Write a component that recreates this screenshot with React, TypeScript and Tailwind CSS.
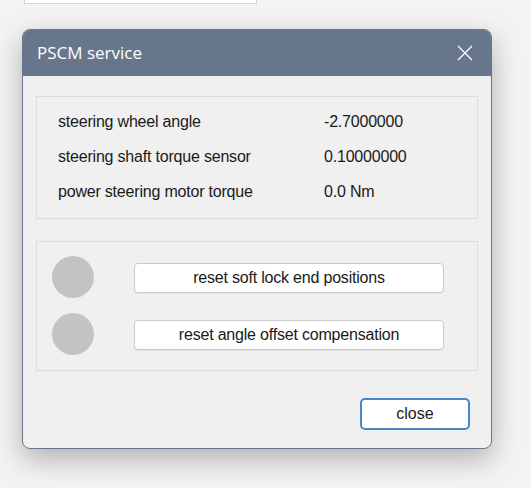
import React from "react";

const readings = [
  { label: "steering wheel angle", value: "-2.7000000" },
  { label: "steering shaft torque sensor", value: "0.10000000" },
  { label: "power steering motor torque", value: "0.0 Nm" },
];

const actions = ["reset soft lock end positions", "reset angle offset compensation"];

export default function App() {
  return (
    <div className="h-[488px] w-full overflow-hidden bg-[#f3f3f3] font-['Liberation_Sans',Arial,sans-serif] text-[#1a1a1a]">
      {/* edge of the window behind */}
      <div className="ml-[24px] h-[4px] w-[233px] border-x border-b border-[#d6d6d6] bg-white" />

      <div className="ml-[22px] mt-[25px] flex h-[420px] w-[470px] flex-col overflow-hidden rounded-[8px] border border-[#67768a] bg-[#f0f0f0] shadow-[0_10px_28px_rgba(0,0,0,0.28)]">
        <div className="flex h-[46px] shrink-0 items-center justify-between bg-[#67768a] pl-[14px] pr-[18px]">
          <span className="font-['Open_Sans',sans-serif] text-[17px] text-white">PSCM service</span>
          <svg width="16" height="16" viewBox="0 0 16 16" stroke="#ffffff" strokeWidth="1.3" fill="none">
            <path d="M1 1 L15 15 M15 1 L1 15" />
          </svg>
        </div>

        <div className="flex flex-col px-[13px]">
          <div className="mt-[20px] h-[123px] border border-[#dcdcdc] pb-[10px] pl-[21px] pt-[7px]">
            {readings.map((r) => (
              <div key={r.label} className="flex h-[35px] items-center text-[16px] tracking-[-0.2px]">
                <span className="w-[266px]">{r.label}</span>
                <span>{r.value}</span>
              </div>
            ))}
          </div>

          <div className="mt-[22px] flex h-[130px] flex-col gap-[15px] border border-[#dcdcdc] pl-[15px] pt-[14px]">
            {actions.map((a) => (
              <div key={a} className="flex h-[42px] items-center gap-[40px]">
                <div className="h-[42px] w-[42px] rounded-full bg-[#c3c3c3]" />
                <button className="mt-[2px] h-[30px] w-[310px] rounded-[4px] border border-[#cbcbcb] bg-white text-[16px] tracking-[-0.2px] text-[#1a1a1a] shadow-[0_1px_0_rgba(0,0,0,0.06)]">
                  {a}
                </button>
              </div>
            ))}
          </div>

          <div className="mt-[27px] flex justify-end pr-[8px]">
            <button className="h-[32px] w-[110px] rounded-[5px] border-2 border-[#4a86c2] bg-white text-[16px] text-[#1a1a1a]">
              close
            </button>
          </div>
        </div>
      </div>
    </div>
  );
}
